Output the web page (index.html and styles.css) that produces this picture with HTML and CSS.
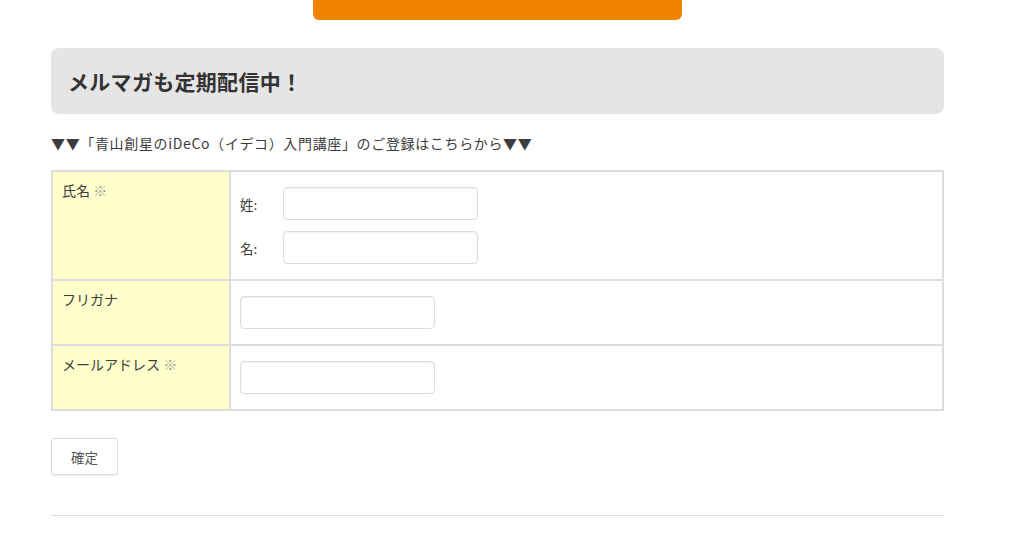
FILE: index.html
```html
<!DOCTYPE html>
<html lang="ja">
<head>
<meta charset="utf-8">
<title>メルマガ登録</title>
<link rel="stylesheet" href="styles.css">
</head>
<body>
<div class="page">
  <div class="top-btn-wrap"><div class="top-btn"></div></div>
  <h2 class="heading">メルマガも定期配信中！</h2>
  <p class="lead">▼▼「青山創星のiDeCo（イデコ）入門講座」のご登録はこちらから▼▼</p>
  <form class="form">
    <table class="ftable">
      <tr>
        <th>氏名 <span class="req">※</span></th>
        <td>
          <div class="name-row"><span class="nlabel">姓:</span><input class="inp" type="text"></div>
          <div class="name-row"><span class="nlabel">名:</span><input class="inp" type="text"></div>
        </td>
      </tr>
      <tr>
        <th>フリガナ</th>
        <td><input class="inp" type="text"></td>
      </tr>
      <tr>
        <th>メールアドレス <span class="req">※</span></th>
        <td><input class="inp" type="text"></td>
      </tr>
    </table>
    <button class="submit" type="button">確定</button>
  </form>
  <hr class="rule">
</div>
</body>
</html>
```

FILE: styles.css
```css
html, body {
  margin: 0;
  padding: 0;
  background: #fff;
}
body {
  font-family: "Noto Sans CJK JP", "Noto Sans", sans-serif;
  color: #3c3c3c;
  font-size: 14px;
}
.page {
  width: 893px;
  margin-left: 51px;
}
.top-btn-wrap {
  display: flex;
  justify-content: center;
}
.top-btn {
  width: 369px;
  height: 20px;
  background: #f08300;
  border-radius: 0 0 6px 6px;
}
.heading {
  margin: 28px 0 0;
  height: 66px;
  box-sizing: border-box;
  background: #e5e5e5;
  border-radius: 8px;
  padding: 0 17px;
  display: flex;
  align-items: center;
  font-size: 21px;
  letter-spacing: 0.3px;
  font-weight: bold;
  color: #333;
  line-height: 1;
}
.lead {
  margin: 19px 0 0;
  font-size: 14px;
  letter-spacing: 0.65px;
  line-height: 20px;
  color: #3c3c3c;
}
.form {
  margin-top: 17px;
}
.ftable {
  width: 100%;
  border-collapse: collapse;
  border: 2px solid #ddd;
}
.ftable th, .ftable td {
  border: 2px solid #ddd;
  vertical-align: top;
  text-align: left;
}
.ftable th {
  width: 158px;
  background: #ffffcc;
  font-weight: normal;
  font-size: 14px;
  line-height: 20px;
  padding: 8px 9px;
}
.ftable td {
  padding: 15px 9px 15px;
}
.req {
  color: #999;
}
.name-row {
  display: flex;
  align-items: center;
}
.name-row + .name-row {
  margin-top: 11px;
}
.nlabel {
  width: 43px;
  font-size: 13.5px;
}
.inp {
  display: block;
  width: 195px;
  height: 33px;
  box-sizing: border-box;
  margin: 0;
  border: 1px solid #dcdcdc;
  border-radius: 4px;
  box-shadow: inset 0 1px 2px rgba(0,0,0,0.06);
  background: #fff;
  font-family: inherit;
}
.submit {
  display: block;
  margin-top: 27px;
  width: 67px;
  height: 37px;
  border: 1px solid #dcdcdc;
  border-radius: 3px;
  background: #fff;
  box-shadow: 0 1px 2px rgba(0,0,0,0.08);
  font-family: inherit;
  font-size: 13.5px;
  color: #555;
  padding: 0;
}
.rule {
  margin: 40px 0 0;
  border: 0;
  border-top: 1px solid #ddd;
  height: 0;
}
```
